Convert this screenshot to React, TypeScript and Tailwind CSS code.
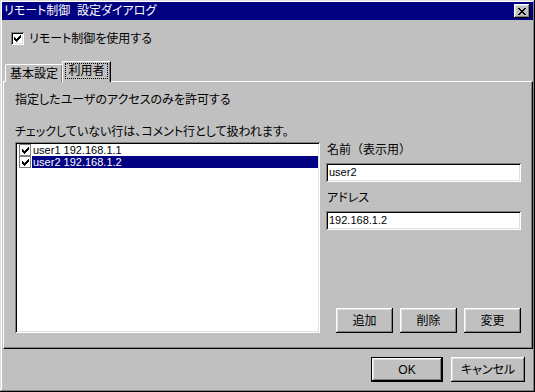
import React from 'react';

const FONT = "font-['Liberation_Sans','Noto_Sans_CJK_JP',sans-serif] [font-feature-settings:'palt']";

const raised =
  'shadow-[inset_-1px_-1px_#000,inset_1px_1px_#fff,inset_-2px_-2px_#808080,inset_2px_2px_#dfdfdf]';
const sunken =
  'shadow-[inset_1px_1px_#808080,inset_-1px_-1px_#fff,inset_2px_2px_#000,inset_-2px_-2px_#dfdfdf]';

// 7x7 bitmap check mark
const checkRows = ['......x', '.....xx', 'x...xxx', 'xx.xxx.', 'xxxxx..', '.xxx...', '..x....'];

const CheckMark = () => (
  <svg width="7" height="7" viewBox="0 0 7 7" shapeRendering="crispEdges">
    {checkRows.flatMap((row, y) =>
      row.split('').map((c, x) => (c === 'x' ? <rect key={`${x}-${y}`} x={x} y={y} width="1" height="1" fill="#000" /> : null))
    )}
  </svg>
);

const Check = () => (
  <div className={`w-[13px] h-[13px] bg-white flex items-center justify-center shrink-0 ${sunken}`}>
    <CheckMark />
  </div>
);

const Button = ({ label, w, isDefault }: { label: string; w: string; isDefault?: boolean }) => (
  <div
    className={`${w} h-[25px] bg-[#c0c0c0] flex items-center justify-center text-[12px] text-black ${
      isDefault ? 'border border-black ' + raised : raised
    }`}
  >
    {label}
  </div>
);

const users = [
  { name: 'user1', addr: '192.168.1.1', selected: false },
  { name: 'user2', addr: '192.168.1.2', selected: true },
];

export default function App() {
  return (
    <div
      className={`w-[535px] h-[392px] bg-[#c0c0c0] p-[2px] flex flex-col text-black ${FONT} shadow-[inset_-1px_-1px_#000,inset_1px_1px_#dfdfdf,inset_-2px_-2px_#808080,inset_2px_2px_#fff]`}
    >
      {/* title bar */}
      <div className="h-[18px] bg-[#000080] flex items-center justify-between pl-[2px] pr-[3px]">
        <span className="text-white text-[12px] leading-none">リモート制御&nbsp;&nbsp;設定ダイアログ</span>
        <div className={`w-[16px] h-[14px] bg-[#c0c0c0] flex items-center justify-center ${raised}`}>
          <svg width="8" height="7" viewBox="0 0 8 7" shapeRendering="crispEdges">
            <path d="M0 0h2v1h1v1h2v-1h1v-1h2v1h-1v1h-1v1h-1v1h1v1h1v1h1v1h-2v-1h-1v-1h-2v1h-1v1h-2v-1h1v-1h1v-1h1v-1h-1v-1h-1v-1h-1z" fill="#000" />
          </svg>
        </div>
      </div>

      {/* enable checkbox */}
      <div className="flex items-center gap-[5px] pl-[9px] mt-[12px] h-[13px]">
        <Check />
        <span className="text-[12px] leading-none">リモート制御を使用する</span>
      </div>

      {/* tabs */}
      <div className="flex items-end pl-[3px] mt-[16px] h-[20px] relative z-10">
        <div className="w-[58px] h-[18px] bg-[#c0c0c0] border-t border-l border-white border-r border-r-black rounded-tl-[2px] flex items-center justify-center text-[12px] shadow-[inset_-1px_0_#808080] mb-[-1px]">
          <span className="pt-[1px]">基本設定</span>
        </div>
        <div className="w-[49px] h-[21px] -ml-[1px] bg-[#c0c0c0] border-t border-l border-white border-r border-r-black rounded-tl-[2px] flex items-start justify-center pt-[2px] text-[12px] shadow-[inset_-1px_0_#808080] mb-[-1px]">
          <span className="outline-1 outline-dotted outline-black px-[2px] leading-[14px]">利用者</span>
        </div>
      </div>

      {/* tab panel */}
      <div className="ml-[1px] w-[530px] h-[268px] border-t border-l border-white border-r border-b border-r-black border-b-black shadow-[inset_-1px_-1px_#808080] flex flex-col pl-[11px] pr-[11px]">
        <div className="text-[12px] leading-none mt-[12px]">指定したユーザのアクセスのみを許可する</div>
        <div className="text-[12px] leading-none mt-[20px]">チェックしていない行は、コメント行として扱われます。</div>
        <div className="flex gap-[6px] mt-[4px]">
          {/* list */}
          <div className={`w-[305px] h-[191px] bg-white p-[2px] ${sunken}`}>
            {users.map((u) => (
              <div key={u.name} className="flex items-center h-[12px] pl-[2px]">
                <div className="w-[12px] h-[12px] bg-white flex items-center justify-center shrink-0 shadow-[inset_1px_1px_#808080,inset_-1px_-1px_#808080]">
                  <CheckMark />
                </div>
                <span
                  className={`ml-[1px] pl-[1px] flex-1 h-[12px] text-[11px] leading-[12px] ${
                    u.selected ? 'bg-[#000080] text-white' : ''
                  }`}
                >
                  {u.name} {u.addr}
                </span>
              </div>
            ))}
          </div>

          {/* right column */}
          <div className="flex-1 flex flex-col">
            <div className="text-[12px] leading-none mt-[2px] pl-[1px] [font-feature-settings:normal]">名前（表示用）</div>
            <div className={`mt-[7px] h-[19px] bg-white flex items-center pl-[3px] text-[11px] ${sunken}`}>user2</div>
            <div className="text-[12px] leading-none mt-[10px] pl-[1px]">アドレス</div>
            <div className={`mt-[7px] h-[19px] bg-white flex items-center pl-[3px] text-[11px] ${sunken}`}>192.168.1.2</div>
            <div className="mt-auto flex justify-end gap-[7px]">
              <Button label="追加" w="w-[57px]" />
              <Button label="削除" w="w-[57px]" />
              <Button label="変更" w="w-[57px]" />
            </div>
          </div>
        </div>
      </div>

      {/* bottom buttons */}
      <div className="flex justify-end gap-[8px] mt-[8px] pr-[8px]">
        <Button label="OK" w="w-[72px]" isDefault />
        <Button label="キャンセル" w="w-[74px]" />
      </div>
    </div>
  );
}
